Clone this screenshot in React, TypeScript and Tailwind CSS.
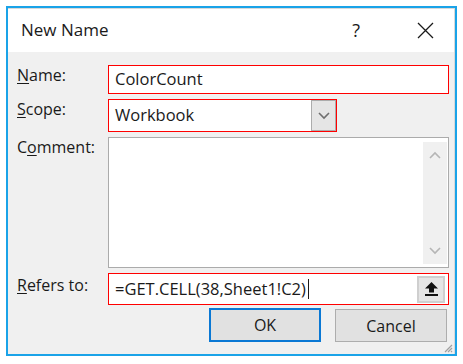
import React from 'react'

const font = { fontFamily: '"Open Sans", "Noto Sans", sans-serif' }

function Chevron({ up = false, className = '' }: { up?: boolean; className?: string }) {
  return (
    <svg width="12" height="8" viewBox="0 0 12 8" className={className}>
      <path d={up ? 'M1 7 L6 2 L11 7' : 'M1 1 L6 6 L11 1'} fill="none" stroke="currentColor" strokeWidth="1.6" />
    </svg>
  )
}

function Label({ children, className = '' }: { children: React.ReactNode; className?: string }) {
  return <div className={`w-[100px] shrink-0 pl-[9px] text-[16px] leading-[24px] text-[#1a1a1a] whitespace-nowrap ${className}`}>{children}</div>
}

export default function App() {
  return (
    <div className="w-[463px] h-[364px] bg-white pt-[6px] pl-[6px]" style={font}>
      <div className="w-[451px] h-[350px] border-2 border-[#1aa3e8] flex flex-col">
        {/* title bar */}
        <div className="h-[44px] bg-white flex items-center pl-[13px] pr-[20px] border-t border-r border-[#d9d9d9]">
          <span className="text-[17px] text-[#1a1a1a] pb-[1px]">New Name</span>
          <span className="ml-auto mr-[57px] text-[18px] text-[#1a1a1a]">?</span>
          <svg width="17" height="17" viewBox="0 0 17 17">
            <path d="M1 1 L16 16 M16 1 L1 16" stroke="#1a1a1a" strokeWidth="1.3" />
          </svg>
        </div>

        {/* body */}
        <div className="relative flex-1 bg-[#f0f0f0] pt-[13px] flex flex-col border-r border-[#d9d9d9]">
          <div className="flex items-start">
            <Label className="-mt-[2px]"><span className="underline underline-offset-2">N</span>ame:</Label>
            <div className="w-[341px] h-[29px] bg-white border border-[#ff0000] flex items-center pl-[6px] text-[16.5px] text-[#1a1a1a]">
              ColorCount
            </div>
          </div>

          <div className="flex items-start mt-[5px]">
            <Label className="-mt-[2px]"><span className="underline underline-offset-2">S</span>cope:</Label>
            <div className="w-[229px] h-[33px] bg-white border border-[#ff0000] flex items-center">
              <span className="pl-[6px] text-[16.5px] text-[#1a1a1a] flex-1">Workbook</span>
              <div className="w-[25px] h-[31px] bg-[#e5e5e5] border border-[#acacac] flex items-center justify-center text-[#6e6e6e]">
                <Chevron />
              </div>
            </div>
          </div>

          <div className="flex items-start mt-[5px]">
            <Label className="-mt-[2px]">C<span className="underline underline-offset-2">o</span>mment:</Label>
            <div className="w-[341px] h-[131px] bg-white border border-[#ababab] flex justify-end pt-[4px] pb-[3px] pr-[1px]">
              <div className="w-[24px] h-full bg-[#f0f0f0] flex flex-col items-center justify-between py-[9px] text-[#b5b5b5]">
                <Chevron up />
                <Chevron />
              </div>
            </div>
          </div>

          <div className="flex items-start mt-[5px]">
            <Label><span className="underline underline-offset-2">R</span>efers to:</Label>
            <div className="w-[341px] h-[32px] bg-white border border-[#ff0000] flex items-center pl-[6px] pr-[3px]">
              <span className="text-[16.5px] text-[#1a1a1a]">=GET.CELL(38,Sheet1!C2)</span>
              <span className="ml-[2px] w-[1px] h-[20px] bg-[#1a1a1a]" />
              <div className="ml-auto w-[28px] h-[27px] bg-[#e5e5e5] border-2 border-[#cfcfcf] flex items-center justify-center">
                <svg width="15" height="16" viewBox="0 0 15 16">
                  <path d="M7.5 1 L14 7.5 H10 V11.5 H5 V7.5 H1 Z" fill="#111" />
                  <rect x="1" y="13" width="13" height="2" fill="#111" />
                </svg>
              </div>
            </div>
          </div>

          <div className="flex justify-end gap-[14px] mt-[3px] pr-[7px]">
            <button className="w-[112px] h-[34px] bg-[#e1e1e1] border-2 border-[#0a78d4] text-[16px] text-[#1a1a1a]">OK</button>
            <button className="w-[112px] h-[33px] mt-[1px] bg-[#e1e1e1] border border-[#adadad] text-[16px] text-[#1a1a1a]">Cancel</button>
          </div>

          {/* resize grip */}
          <svg className="absolute right-[1px] bottom-[1px]" width="10" height="10" viewBox="0 0 10 10">
            <path d="M9 2 L2 9 M9 5 L5 9 M9 8 L8 9" stroke="#a0a0a0" strokeWidth="1.2" />
          </svg>
        </div>
      </div>
    </div>
  )
}
